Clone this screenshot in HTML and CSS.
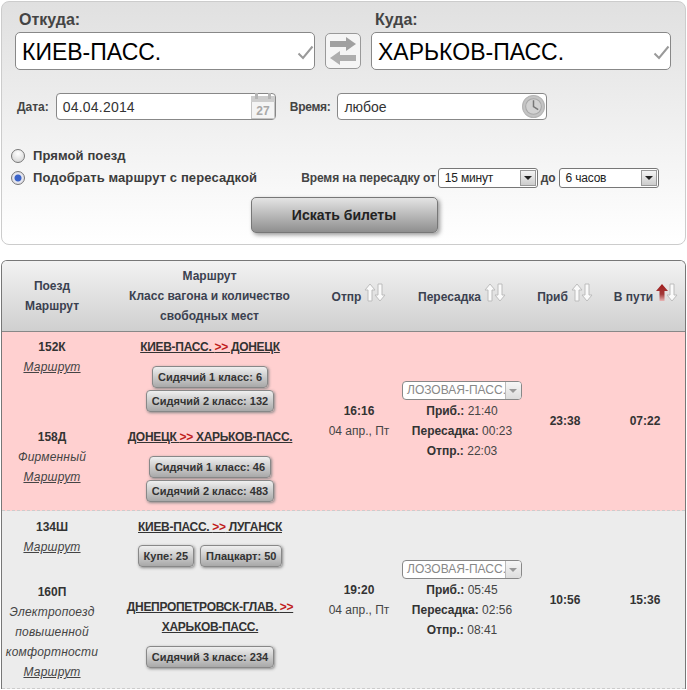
FILE: index.html
```html
<!DOCTYPE html>
<html lang="ru">
<head>
<meta charset="utf-8">
<title>Поиск билетов</title>
<link rel="stylesheet" href="styles.css">
</head>
<body>
<form class="search">
  <div class="stations">
    <div class="station">
      <div class="station-label">Откуда:</div>
      <div class="station-input">КИЕВ-ПАСС.
        <svg class="check" width="17" height="15" viewBox="0 0 17 15"><path d="M1.5 8.5 L6 13 L15.5 1.5" fill="none" stroke="#9a9a9a" stroke-width="2"/></svg>
      </div>
    </div>
    <div class="swap">
      <svg width="26" height="28" viewBox="0 0 26 28">
        <rect x="0" y="4" width="16" height="6" fill="#a0a0a0"/>
        <path d="M16 0 L26 7 L16 14 Z" fill="#a0a0a0"/>
        <rect x="10" y="18" width="16" height="6" fill="#aeaeae"/>
        <path d="M10 14 L0 21 L10 28 Z" fill="#aeaeae"/>
      </svg>
    </div>
    <div class="station">
      <div class="station-label station-label-to">Куда:</div>
      <div class="station-input">ХАРЬКОВ-ПАСС.
        <svg class="check" width="17" height="15" viewBox="0 0 17 15"><path d="M1.5 8.5 L6 13 L15.5 1.5" fill="none" stroke="#9a9a9a" stroke-width="2"/></svg>
      </div>
    </div>
  </div>
  <div class="datetime">
    <span class="dt-label dt-label-date">Дата:</span>
    <div class="dt-input dt-input-date">04.04.2014
      <svg class="dt-icon-cal" width="26" height="27" viewBox="0 0 26 27">
        <rect x="1.5" y="3.5" width="23" height="22" fill="#f4f4f4" stroke="#c4c4c4"/>
        <rect x="1" y="3" width="24" height="6" fill="#cdcdcd"/>
        <rect x="5" y="0" width="3" height="6" fill="#b5b5b5"/>
        <rect x="18" y="0" width="3" height="6" fill="#b5b5b5"/>
        <text x="13" y="22" class="cal-day" text-anchor="middle">27</text>
      </svg>
    </div>
    <span class="dt-label dt-label-time">Время:</span>
    <div class="dt-input dt-input-time">любое
      <svg class="dt-icon-clock" width="23" height="23" viewBox="0 0 22 22">
        <circle cx="11" cy="11" r="10.5" fill="#c4c4c4" stroke="#b4b4b4"/>
        <circle cx="11" cy="11" r="7.5" fill="#d2d2d2" stroke="#a8a8a8"/>
        <path d="M11 5 V11 L15.5 14" fill="none" stroke="#777" stroke-width="1.4"/>
      </svg>
    </div>
  </div>
  <div class="options">
    <div class="radio-row">
      <span class="radio"></span><span class="radio-label">Прямой поезд</span>
    </div>
    <div class="radio-row">
      <span class="radio radio-on"></span><span class="radio-label">Подобрать маршрут с пересадкой</span>
      <div class="transfer">
        <span>Время на пересадку от</span>
        <div class="combo combo-from">15 минут<span class="combo-arrow"></span></div>
        <span>до</span>
        <div class="combo combo-to">6 часов<span class="combo-arrow"></span></div>
      </div>
    </div>
  </div>
  <div class="submit-row"><button type="button" class="submit">Искать билеты</button></div>
</form>

<section class="results">
  <div class="head">
    <div class="head-cell">Поезд<br>Маршрут</div>
    <div class="head-cell">Маршрут<br>Класс вагона и количество<br>свободных мест</div>
    <div class="head-cell head-sort">Отпр
      <svg class="sort" width="22" height="19" viewBox="0 0 22 19"><path class="arr" d="M6 1 L11 7 H8 V18 H4 V7 H1 Z"/><path class="arr" d="M16 18 L21 12 H18 V1 H14 V12 H11 Z"/></svg>
    </div>
    <div class="head-cell head-sort">Пересадка
      <svg class="sort" width="22" height="19" viewBox="0 0 22 19"><path class="arr" d="M6 1 L11 7 H8 V18 H4 V7 H1 Z"/><path class="arr" d="M16 18 L21 12 H18 V1 H14 V12 H11 Z"/></svg>
    </div>
    <div class="head-cell head-sort">Приб
      <svg class="sort" width="22" height="19" viewBox="0 0 22 19"><path class="arr" d="M6 1 L11 7 H8 V18 H4 V7 H1 Z"/><path class="arr" d="M16 18 L21 12 H18 V1 H14 V12 H11 Z"/></svg>
    </div>
    <div class="head-cell head-sort">В пути
      <svg class="sort" width="22" height="19" viewBox="0 0 22 19">
        <defs><linearGradient id="up" x1="0" y1="0" x2="0" y2="1"><stop offset="0" stop-color="#a11c1c"/><stop offset="0.6" stop-color="#a33a3a"/><stop offset="1" stop-color="#e9b5b5"/></linearGradient></defs>
        <path d="M6 1 L12 8 H8.5 V18 H3.5 V8 H0 Z" fill="url(#up)"/><path class="arr" d="M16 18 L21 12 H18 V1 H14 V12 H11 Z"/></svg>
    </div>
  </div>

  <div class="row row-pink">
    <div class="legs">
      <div class="leg">
        <div class="train"><b>152К</b><br><a class="link">Маршрут</a></div>
        <div class="route">
          <a class="way">КИЕВ-ПАСС. <em>&gt;&gt;</em> ДОНЕЦК</a>
          <div class="seats"><span class="seat">Сидячий 1 класс: 6</span><span class="seat">Сидячий 2 класс: 132</span></div>
        </div>
      </div>
      <div class="leg">
        <div class="train"><b>158Д</b><br><i>Фирменный</i><br><a class="link">Маршрут</a></div>
        <div class="route">
          <a class="way">ДОНЕЦК <em>&gt;&gt;</em> ХАРЬКОВ-ПАСС.</a>
          <div class="seats"><span class="seat">Сидячий 1 класс: 46</span><span class="seat">Сидячий 2 класс: 483</span></div>
        </div>
      </div>
    </div>
    <div class="cell"><b>16:16</b><br>04 апр., Пт</div>
    <div class="cell">
      <div class="stop">ЛОЗОВАЯ-ПАСС.<span class="stop-arrow"></span></div>
      <b>Приб.:</b> 21:40<br><b>Пересадка:</b> 00:23<br><b>Отпр.:</b> 22:03
    </div>
    <div class="cell"><b>23:38</b></div>
    <div class="cell cell-last"><b>07:22</b></div>
  </div>

  <div class="row row-grey">
    <div class="legs">
      <div class="leg">
        <div class="train"><b>134Ш</b><br><a class="link">Маршрут</a></div>
        <div class="route">
          <a class="way">КИЕВ-ПАСС. <em>&gt;&gt;</em> ЛУГАНСК</a>
          <div class="seats seats-inline"><span class="seat">Купе: 25</span><span class="seat">Плацкарт: 50</span></div>
        </div>
      </div>
      <div class="leg leg-center">
        <div class="train"><b>160П</b><br><i>Электропоезд<br>повышенной<br>комфортности</i><br><a class="link">Маршрут</a></div>
        <div class="route">
          <a class="way">ДНЕПРОПЕТРОВСК-ГЛАВ. <em>&gt;&gt;</em><br>ХАРЬКОВ-ПАСС.</a>
          <div class="seats"><span class="seat">Сидячий 3 класс: 234</span></div>
        </div>
      </div>
    </div>
    <div class="cell"><b>19:20</b><br>04 апр., Пт</div>
    <div class="cell">
      <div class="stop">ЛОЗОВАЯ-ПАСС.<span class="stop-arrow"></span></div>
      <b>Приб.:</b> 05:45<br><b>Пересадка:</b> 02:56<br><b>Отпр.:</b> 08:41
    </div>
    <div class="cell"><b>10:56</b></div>
    <div class="cell cell-last"><b>15:36</b></div>
  </div>
</section>
</body>
</html>
```
FILE: styles.css
```css
* { box-sizing: border-box; }
html, body { margin: 0; height: 690px; overflow: hidden; background: #fff; }
body { padding: 1px 1px 0; font: 12px/20px "Liberation Sans", Arial, sans-serif; color: #333; }

.search {
  height: 244px;
  border: 1px solid #ccc;
  border-radius: 8px;
  background: linear-gradient(#e0e0e0, #fff);
  padding: 6px 14px 0 10px;
}
.stations { display: flex; align-items: flex-end; padding-left: 3px; }
.station { width: 300px; }
.station-label { font: bold 16px/24px "Liberation Sans", sans-serif; color: #444; padding-left: 4px; }
.station-input {
  position: relative;
  height: 38px;
  border: 1px solid #888;
  border-radius: 5px;
  background: #fff;
  color: #000;
  font-size: 23px;
  line-height: 38px;
  padding-left: 6px;
}
.check { position: absolute; right: 0; top: 12px; }
.swap {
  width: 36px;
  height: 36px;
  margin: 0 10px 1px;
  border: 1px solid #999;
  border-radius: 5px;
  background: #f5f5f5;
  display: flex;
  align-items: center;
  justify-content: center;
}

.datetime { display: flex; align-items: center; margin-top: 23px; padding-left: 5px; }
.dt-label { font-weight: bold; color: #444; }
.dt-input {
  position: relative;
  height: 27px;
  border: 1px solid #888;
  border-radius: 4px;
  background: #fff;
  font-size: 14px;
  line-height: 27px;
  color: #333;
  padding-left: 6px;
}
.dt-input-date { width: 220px; margin-left: 7px; letter-spacing: 0.2px; }
.dt-label-time { margin-left: 14px; letter-spacing: -0.3px; }
.dt-input-time { width: 210px; margin-left: 7px; }
.dt-icon-cal { position: absolute; right: -1px; top: -1px; }
.cal-day { font: bold 12px "Liberation Sans", sans-serif; fill: #a8a8a8; }
.dt-icon-clock { position: absolute; right: 1px; top: 1px; }

.options { margin-top: 25px; margin-left: -1px; }
.radio-row { display: flex; align-items: center; height: 22px; }
.radio {
  width: 14px;
  height: 14px;
  border: 1px solid #777;
  border-radius: 50%;
  background: radial-gradient(circle at 50% 30%, #fff, #cfcfcf);
  flex: none;
}
.radio-on { background: radial-gradient(circle, #3a63c8 0 3px, #e8e8f0 4px, #d0d0d8); }
.radio-label { margin-left: 8px; font-weight: bold; font-size: 13px; letter-spacing: 0.1px; color: #3c3c3c; white-space: nowrap; }
.transfer { display: flex; align-items: center; margin-left: 44px; font-weight: bold; letter-spacing: -0.1px; color: #444; white-space: nowrap; }
.combo {
  position: relative;
  height: 20px;
  border: 1px solid #777;
  border-radius: 3px;
  background: #fff;
  color: #222;
  font-weight: normal;
  letter-spacing: -0.2px;
  line-height: 18px;
  padding-left: 6px;
}
.combo-from { width: 100px; margin: 0 3px 0 2px; }
.combo-to { width: 100px; margin-left: 3px; }
.combo-arrow {
  position: absolute;
  right: 1px;
  top: 1px;
  width: 16px;
  height: 16px;
  border: 1px solid #999;
  background: linear-gradient(#f4f4f4, #ccc);
}
.combo-arrow::after {
  content: "";
  position: absolute;
  left: 3px;
  top: 5px;
  border: 4px solid transparent;
  border-top: 4px solid #222;
  border-bottom: 0;
}

.submit-row { display: flex; justify-content: center; margin-top: 8px; padding-left: 5px; }
.submit {
  width: 187px;
  height: 36px;
  border: 1px solid #777;
  border-radius: 5px;
  background: linear-gradient(#e4e4e4, #8f8f8f);
  box-shadow: 2px 2px 4px #999;
  font: bold 14px "Liberation Sans", sans-serif;
  color: #222;
}

.results {
  margin-top: 15px;
  border: 1px solid #777;
  border-bottom: 0;
  border-radius: 6px 6px 0 0;
  overflow: hidden;
}
.head, .row { display: grid; grid-template-columns: 315px 84px 122px 84px 1fr; }
.head {
  height: 71px;
  border-bottom: 1px solid #888;
  background: linear-gradient(#f2f2f2, #cfcfcf);
  grid-template-columns: 100px 215px 84px 122px 84px 1fr;
  font-weight: bold;
  color: #3b4150;
  text-align: center;
}
.head-cell { align-self: center; }
.head-sort { display: flex; justify-content: center; align-items: center; gap: 3px; white-space: nowrap; padding-top: 2px; }
.sort { flex: none; margin-top: -10px; }
.arr { fill: #fafafa; stroke: #bcbcbc; stroke-width: 1; }

.row { text-align: center; border-bottom: 1px dashed #ccc; }
.row-pink { background: #ffd0d0; padding: 5px 0 8px; }
.row-pink .cell { padding-top: 2px; }
.row-grey { background: #ececec; padding: 6px 0 6px; }
.legs { display: flex; flex-direction: column; gap: 15px; }
.leg { display: grid; grid-template-columns: 100px 215px; align-items: start; }
.leg-center { align-items: center; }
.route { padding-left: 1px; }
.train { color: #444; }
.train b { color: #333; }
.train i, .link { letter-spacing: 0.2px; }
.link { font-style: italic; text-decoration: underline; color: #444; }
.way { font-weight: bold; letter-spacing: -0.3px; text-decoration: underline; color: #333; }
.way em { font-style: normal; color: #c01c1c; }
.seats { display: flex; flex-direction: column; align-items: center; gap: 2px; margin-top: 9px; }
.seats-inline { flex-direction: row; justify-content: center; gap: 6px; margin-top: 8px; }
.seat {
  height: 22px;
  padding: 0 5px;
  border: 1px solid #888;
  border-radius: 4px;
  background: linear-gradient(#efefef, #a8a8a8);
  box-shadow: 1px 1px 3px #888;
  font-size: 11px;
  font-weight: bold;
  line-height: 20px;
  color: #333;
  white-space: nowrap;
}
.cell { align-self: center; color: #444; }
.cell-last { padding-right: 2px; }
.cell b { color: #333; }
.stop {
  position: relative;
  width: 120px;
  height: 19px;
  margin: 0 auto 1px;
  border: 1px solid #888;
  border-radius: 4px;
  background: #fff;
  color: #888;
  line-height: 17px;
  text-align: left;
  padding-left: 4px;
  overflow: hidden;
  white-space: nowrap;
}
.stop-arrow {
  position: absolute;
  right: 0;
  top: 0;
  width: 16px;
  height: 17px;
  border-left: 1px solid #bbb;
  background: linear-gradient(#f6f6f6, #ddd);
}
.stop-arrow::after {
  content: "";
  position: absolute;
  left: 3px;
  top: 7px;
  border: 4px solid transparent;
  border-top: 4px solid #999;
  border-bottom: 0;
}
```
